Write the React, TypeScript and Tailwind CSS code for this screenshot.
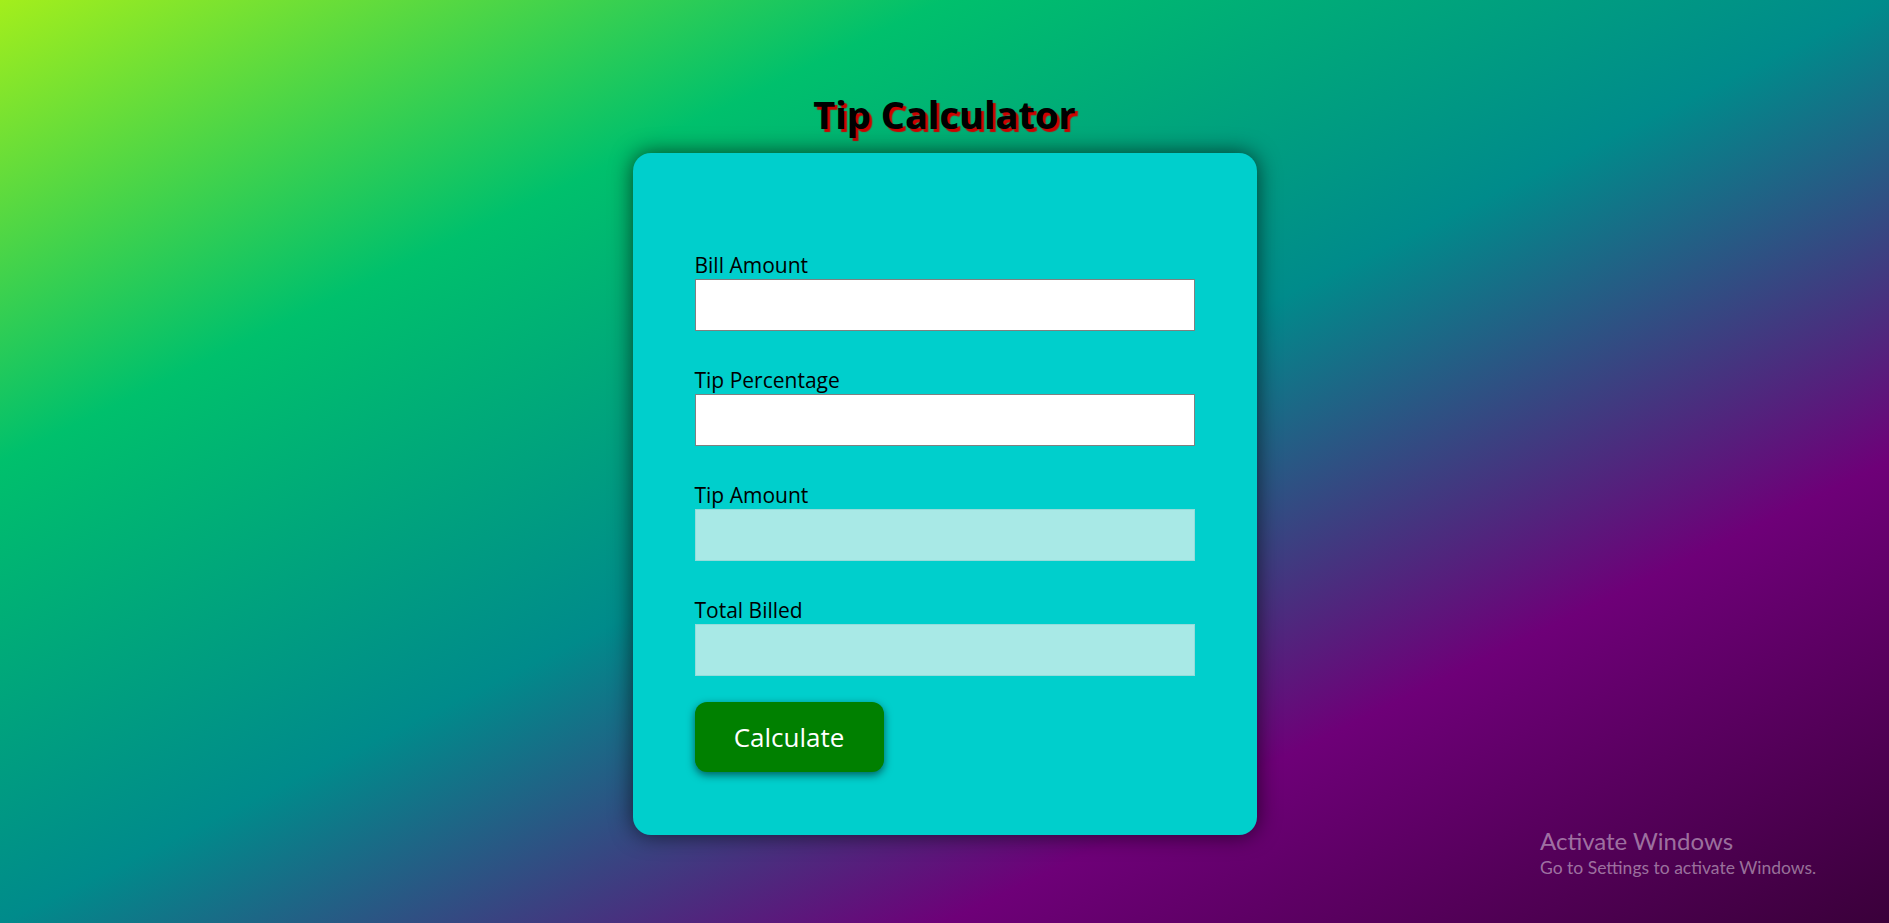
import { useState } from "react"

export default function App() {
  const [bill, setBill] = useState("")
  const [tip, setTip] = useState("")
  const [tipAmount, setTipAmount] = useState("")
  const [total, setTotal] = useState("")

  const calculate = () => {
    const b = parseFloat(bill)
    const t = parseFloat(tip)
    if (isNaN(b) || isNaN(t)) return
    const amount = (b * t) / 100
    setTipAmount(amount.toFixed(2))
    setTotal((b + amount).toFixed(2))
  }

  return (
    <div className="relative h-screen w-full overflow-hidden bg-[linear-gradient(to_bottom_right,#a3ee1c,#00c06c,#008b8b,#6e0078,#3a003a)] font-['Open_Sans',sans-serif]">
      <div className="flex flex-col items-center">
        {/* Title */}
        <h1 className="mt-[88px] mb-[13px] text-[38px] leading-[52px] font-bold text-black [text-shadow:3px_3px_1px_#d00000]">
          Tip Calculator
        </h1>

        {/* Card */}
        <div className="w-[624px] rounded-[18px] bg-[#00cfcc] px-[62px] pt-[99px] pb-[63px] shadow-[0_0_22px_rgba(0,0,0,0.65)]">
          <Field label="Bill Amount" value={bill} onChange={setBill} />
          <Field label="Tip Percentage" value={tip} onChange={setTip} />
          <Field label="Tip Amount" value={tipAmount} readOnly />
          <Field label="Total Billed" value={total} readOnly last />

          <button
            onClick={calculate}
            className="mt-[26px] h-[70px] w-[189px] rounded-[12px] bg-[#008000] text-[26px] text-white shadow-[0_3px_8px_rgba(0,0,0,0.55)]"
          >
            Calculate
          </button>
        </div>
      </div>

      {/* Windows watermark */}
      <div className="absolute left-[1540px] top-[825px] font-['Lato',sans-serif] text-white/45">
        <div className="text-[24px] leading-[31px]">Activate Windows</div>
        <div className="text-[17.5px] leading-[23px]">Go to Settings to activate Windows.</div>
      </div>
    </div>
  )
}

function Field({
  label,
  value,
  onChange,
  readOnly,
  last,
}: {
  label: string
  value: string
  onChange?: (v: string) => void
  readOnly?: boolean
  last?: boolean
}) {
  return (
    <div className={last ? "" : "mb-[36px]"}>
      <label className="block text-[21px] leading-[27px] text-black">{label}</label>
      <input
        type="text"
        value={value}
        readOnly={readOnly}
        onChange={(e) => onChange?.(e.target.value)}
        className={`block h-[52px] w-full px-2 text-[18px] outline-none ${
          readOnly ? "border border-[#95dcda] bg-[#a8e9e6]" : "border border-[#808080] bg-white"
        }`}
      />
    </div>
  )
}
